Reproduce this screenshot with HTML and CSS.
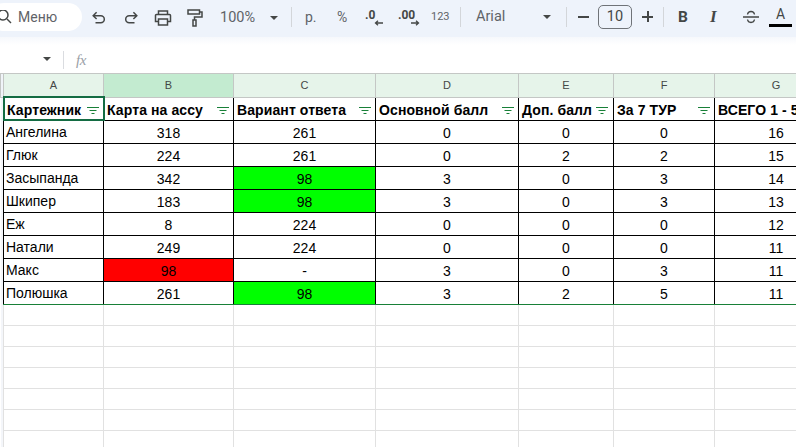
FILE: index.html
```html
<!DOCTYPE html>
<html lang="ru">
<head>
<meta charset="utf-8">
<title>Таблица</title>
<link rel="stylesheet" href="styles.css">
</head>
<body>
<div class="app">
  <div class="toolbar">
    <div class="search">
      <svg class="ic search-ic" viewBox="0 0 16 16"><circle cx="3" cy="5" r="5"/><path d="M7 9l4 4"/></svg>
      <span class="search-text">Меню</span>
    </div>
    <svg class="ic t-undo" viewBox="0 0 14 14"><path d="M1.500 4.800h7.300a3.500 3.500 0 0 1 0 7H3.500M4.600 1.300L1.200 4.800l3.400 3.200"/></svg>
    <svg class="ic t-redo" viewBox="0 0 14 14"><path d="M12.500 4.800H5.200a3.500 3.500 0 0 0 0 7h5.300M9.400 1.300l3.400 3.500-3.400 3.200"/></svg>
    <svg class="ic t-print" viewBox="0 0 18 16"><path d="M4.500 5V1h9v4M4.500 11.500H1.500V5.500a1 1 0 0 1 1-1h13a1 1 0 0 1 1 1v6h-3M4.500 9h9v6h-9z"/></svg>
    <svg class="ic t-paint" viewBox="0 0 16 18"><path d="M1 1h11.500v4H1zM12.500 3h2.500v5H7.500v3M6 11h3v6H6z"/></svg>
    <span class="zoom-val">100%</span><span class="caret t-zoomcaret"></span>
    <span class="sep s1"></span>
    <span class="t-text t-rub">р.</span>
    <span class="t-text t-pct">%</span>
    <span class="t-dec t-dec0"><b>.0</b><svg viewBox="0 0 10 6"><path d="M9 3H1.500M4 .8L1.500 3 4 5.200"/></svg></span>
    <span class="t-dec t-dec00"><b>.00</b><svg viewBox="0 0 10 6"><path d="M1 3h7.500M6 .8L8.500 3 6 5.200"/></svg></span>
    <span class="t-123">123</span>
    <span class="sep s2"></span>
    <span class="t-font">Arial</span><span class="caret t-fontcaret"></span>
    <span class="sep s3"></span>
    <span class="t-minus"></span>
    <span class="t-size">10</span>
    <span class="t-plus"></span>
    <span class="sep s4"></span>
    <span class="t-bold">B</span>
    <span class="t-italic">I</span>
    <svg class="ic t-strike" viewBox="0 0 16 16"><path d="M0 8h16M4.500 5.500C4.800 3.500 6 2.500 8 2.500s3.200 1 3.500 3M4.500 10.500c.3 2 1.500 3 3.500 3s3.200-1 3.500-3"/></svg>
    <span class="t-color">A</span>
  </div>
  <div class="fade"></div>
  <div class="formula">
    <span class="caret f-caret"></span>
    <span class="f-sep"></span>
    <span class="fx">fx</span>
  </div>
  <div class="sheet">
    <table class="grid">
      <colgroup>
        <col class="c0"><col class="c1"><col class="c2"><col class="c3"><col class="c4"><col class="c5"><col class="c6"><col class="c7">
      </colgroup>
      <thead>
        <tr class="letters">
          <th class="corner"></th><th>A</th><th class="picked">B</th><th>C</th><th>D</th><th>E</th><th>F</th><th>G</th>
        </tr>
      </thead>
      <tbody>
        <tr class="head">
          <td class="rowh"></td>
          <td class="active"><div class="hc"><span>Картежник</span><svg class="flt" viewBox="0 0 12 7"><path d="M0 .5h12M2.500 3.500h7M4.500 6.500h3"/></svg></div></td>
          <td><div class="hc"><span>Карта на ассу</span><svg class="flt" viewBox="0 0 12 7"><path d="M0 .5h12M2.500 3.500h7M4.500 6.500h3"/></svg></div></td>
          <td><div class="hc"><span>Вариант ответа</span><svg class="flt" viewBox="0 0 12 7"><path d="M0 .5h12M2.500 3.500h7M4.500 6.500h3"/></svg></div></td>
          <td><div class="hc"><span>Основной балл</span><svg class="flt" viewBox="0 0 12 7"><path d="M0 .5h12M2.500 3.500h7M4.500 6.500h3"/></svg></div></td>
          <td><div class="hc tight"><span>Доп. балл</span><svg class="flt" viewBox="0 0 12 7"><path d="M0 .5h12M2.500 3.500h7M4.500 6.500h3"/></svg></div></td>
          <td><div class="hc"><span>За 7 ТУР</span><svg class="flt" viewBox="0 0 12 7"><path d="M0 .5h12M2.500 3.500h7M4.500 6.500h3"/></svg></div></td>
          <td class="clip"><div class="hc"><span>ВСЕГО 1 - 5 ТУР</span></div></td>
        </tr>
        <tr class="data"><td class="rowh"></td><td class="name">Ангелина</td><td>318</td><td>261</td><td>0</td><td>0</td><td>0</td><td>16</td></tr>
        <tr class="data"><td class="rowh"></td><td class="name">Глюк</td><td>224</td><td>261</td><td>0</td><td>2</td><td>2</td><td>15</td></tr>
        <tr class="data"><td class="rowh"></td><td class="name">Засыпанда</td><td>342</td><td class="green">98</td><td>3</td><td>0</td><td>3</td><td>14</td></tr>
        <tr class="data"><td class="rowh"></td><td class="name">Шкипер</td><td>183</td><td class="green">98</td><td>3</td><td>0</td><td>3</td><td>13</td></tr>
        <tr class="data"><td class="rowh"></td><td class="name">Еж</td><td>8</td><td>224</td><td>0</td><td>0</td><td>0</td><td>12</td></tr>
        <tr class="data"><td class="rowh"></td><td class="name">Натали</td><td>249</td><td>224</td><td>0</td><td>0</td><td>0</td><td>11</td></tr>
        <tr class="data"><td class="rowh"></td><td class="name">Макс</td><td class="red">98</td><td>-</td><td>3</td><td>0</td><td>3</td><td>11</td></tr>
        <tr class="data last"><td class="rowh"></td><td class="name">Полюшка</td><td>261</td><td class="green">98</td><td>3</td><td>2</td><td>5</td><td>11</td></tr>
        <tr class="empty"><td class="rowh"></td><td></td><td></td><td></td><td></td><td></td><td></td><td></td></tr>
        <tr class="empty"><td class="rowh"></td><td></td><td></td><td></td><td></td><td></td><td></td><td></td></tr>
        <tr class="empty"><td class="rowh"></td><td></td><td></td><td></td><td></td><td></td><td></td><td></td></tr>
        <tr class="empty"><td class="rowh"></td><td></td><td></td><td></td><td></td><td></td><td></td><td></td></tr>
        <tr class="empty"><td class="rowh"></td><td></td><td></td><td></td><td></td><td></td><td></td><td></td></tr>
        <tr class="empty"><td class="rowh"></td><td></td><td></td><td></td><td></td><td></td><td></td><td></td></tr>
        <tr class="empty"><td class="rowh"></td><td></td><td></td><td></td><td></td><td></td><td></td><td></td></tr>
      </tbody>
    </table>
  </div>
</div>
</body>
</html>
```
FILE: styles.css
```css
* { box-sizing: border-box; }
html, body { margin: 0; padding: 0; background: #fff; }
body { width: 796px; height: 447px; overflow: hidden; font-family: "Liberation Sans", Arial, sans-serif; }
.app { width: 796px; height: 447px; overflow: hidden; display: flex; flex-direction: column; }

.toolbar { position: relative; height: 37px; background: #eef3fb; color: #444746; flex: none; }
.fade { height: 8px; flex: none; background: linear-gradient(#f6f8fc, #fff); }
.toolbar > * { position: absolute; }
.search { left: -10px; top: 3px; width: 92px; height: 28px; border-radius: 14px; background: #fff; }
.ic { fill: none; stroke: #444746; stroke-width: 1.500; }
.search-ic { position: absolute; left: 10px; top: 7px; width: 16px; height: 16px; }
.search-text { position: absolute; left: 28px; top: 5px; font: 14px/18px Roboto, sans-serif; color: #5f6368; }
.t-undo { left: 92px; top: 11px; width: 14px; height: 14px; }
.t-redo { left: 124px; top: 11px; width: 14px; height: 14px; }
.t-print { left: 154px; top: 10px; width: 18px; height: 16px; }
.t-paint { left: 187px; top: 9px; width: 16px; height: 18px; }
.zoom-val { left: 220px; top: 9px; font: 14.500px/18px Roboto, sans-serif; color: #5f6368; }
.caret { width: 0; height: 0; border-left: 4px solid transparent; border-right: 4px solid transparent; border-top: 4px solid #444746; }
.t-zoomcaret { left: 270px; top: 16px; }
.sep { width: 1px; height: 20px; top: 7px; background: #d3d6da; }
.s1 { left: 291px; }
.s2 { left: 460px; }
.s3 { left: 566px; }
.s4 { left: 663px; }
.t-text { top: 8px; font: 14px/18px Roboto, sans-serif; color: #5f6368; }
.t-rub { left: 305px; }
.t-pct { left: 337px; }
.t-dec { top: 9px; width: 22px; height: 18px; }
.t-dec b { position: absolute; left: 0; top: 0; font: 700 12px/12px Roboto, sans-serif; color: #444746; }
.t-dec svg { position: absolute; right: 0; top: 11px; width: 10px; height: 6px; fill: none; stroke: #444746; stroke-width: 1.300; }
.t-dec0 { left: 365px; width: 19px; }
.t-dec00 { left: 398px; }
.t-123 { left: 431px; top: 9px; font: 11px/16px Roboto, sans-serif; color: #5f6368; }
.t-font { left: 476px; top: 8px; font: 14.500px/18px Roboto, sans-serif; color: #5f6368; }
.t-fontcaret { left: 543px; top: 15px; }
.t-minus { left: 578px; top: 16px; width: 11px; height: 2px; background: #444746; }
.t-size { left: 598px; top: 5px; width: 34px; height: 24px; border: 1px solid #6f7378; border-radius: 5px; text-align: center; font: 14.500px/22px Roboto, sans-serif; color: #444746; }
.t-plus { left: 642px; top: 11px; width: 11px; height: 11px; background: linear-gradient(#444746, #444746) center / 11px 2px no-repeat, linear-gradient(#444746, #444746) center / 2px 11px no-repeat; }
.t-bold { left: 678px; top: 8px; font: 700 15.500px/18px Roboto, sans-serif; color: #444746; }
.t-italic { left: 710px; top: 8px; font: italic 700 17px/18px "Liberation Serif", serif; color: #444746; }
.t-strike { left: 743px; top: 9px; width: 16px; height: 16px; stroke-width: 1.300; }
.t-color { left: 769px; top: 7px; width: 23px; height: 20px; border-bottom: 3px solid #000; text-align: center; font: 14px/15px Roboto, sans-serif; color: #444746; }

.formula { position: relative; height: 28px; flex: none; background: #fff; }
.formula > * { position: absolute; }
.f-caret { left: 43px; top: 12px; }
.f-sep { left: 63px; top: 6px; width: 1px; height: 18px; background: #dadce0; }
.fx { left: 76px; top: 6px; font: italic 15px/18px "Liberation Serif", serif; color: #9aa0a6; letter-spacing: -.5px; }

.sheet { flex: 1; min-height: 0; overflow: hidden; border-top: 1px solid #c4c7c5; }
.grid { width: 837px; table-layout: fixed; border-collapse: collapse; }
.c0 { width: 3px; } .c1 { width: 100px; } .c2 { width: 130px; } .c3 { width: 142px; } .c4 { width: 143px; } .c5 { width: 95px; } .c6 { width: 101px; } .c7 { width: 123px; }
.letters th { height: 23px; padding: 0; background: #e6f4ea; border: 1px solid #c4c7c5; border-top: 0; font: 400 11px/14px "Liberation Sans", sans-serif; color: #444746; text-align: center; }
.letters .picked { background: #c3ebd0; }
.letters .corner { background: #f0f4f9; }
.rowh { padding: 0; background: #f0f4f9; border: 0; }
td { font: 14px/16px "Liberation Sans", sans-serif; color: #000; padding: 2px 2px 0; text-align: center; }
.head td, .data td { border: 1px solid #000; }
.head .rowh, .data .rowh, .empty .rowh { border: 0; background: #f4f6fa; padding: 0; }
.head td { height: 23px; padding: 2px 2px 0; }
.hc { display: flex; align-items: center; justify-content: space-between; font-weight: 700; white-space: nowrap; padding: 0 2px 0 1px; letter-spacing: .1px; }
.hc.tight { padding-right: 3px; }
.flt { width: 12px; height: 7px; flex: none; fill: none; stroke: #188038; stroke-width: 1; margin-top: 2px; }
.clip .hc { overflow: hidden; }
.data td { height: 23px; }
.data .name { text-align: left; padding: 1px 2px 0; }
.green { background: #00ff00; }
.red { background: #ff0000; }
.active { outline: 2px solid #146c43; outline-offset: -1px; }
.last td { border-bottom: 1px solid #188038; }
.empty td { height: 21px; border: 1px solid #e1e1e1; padding: 0; }
.empty .rowh { height: 21px; }
```
